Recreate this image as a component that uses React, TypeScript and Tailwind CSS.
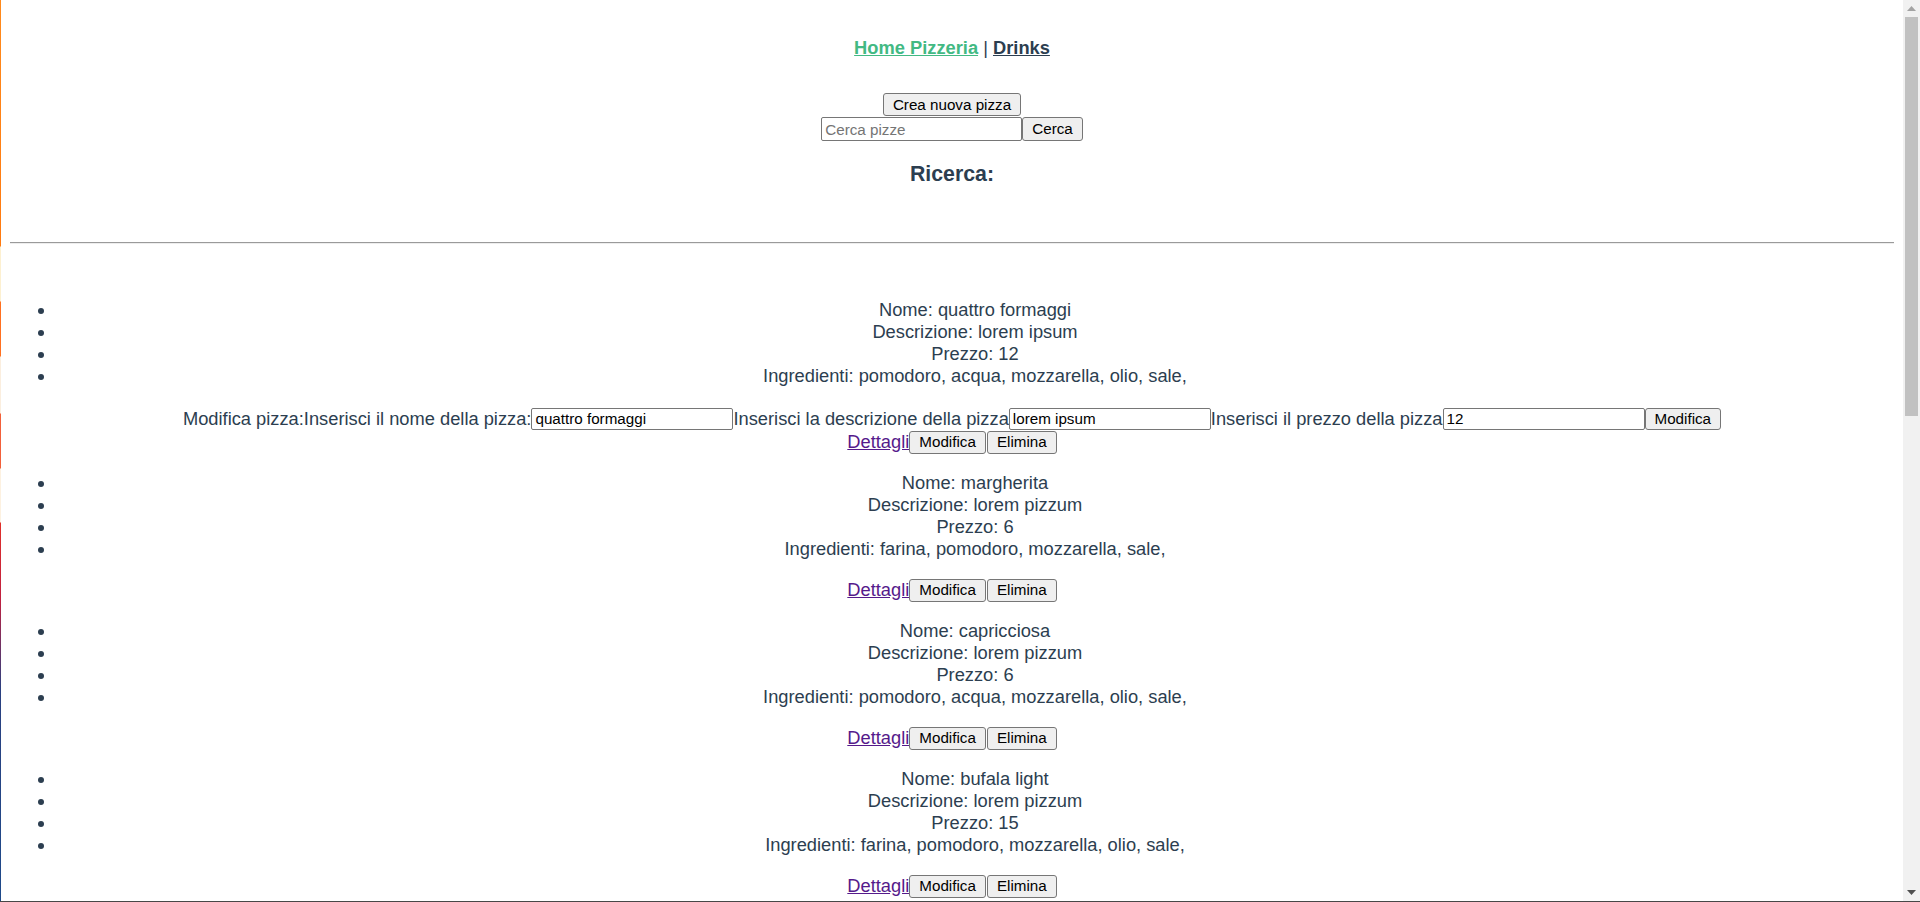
import React from "react";

interface Pizza {
  nome: string;
  descrizione: string;
  prezzo: number;
  ingredienti: string[];
  editing?: boolean;
}

const pizzas: Pizza[] = [
  {
    nome: "quattro formaggi",
    descrizione: "lorem ipsum",
    prezzo: 12,
    ingredienti: ["pomodoro", "acqua", "mozzarella", "olio", "sale"],
    editing: true,
  },
  {
    nome: "margherita",
    descrizione: "lorem pizzum",
    prezzo: 6,
    ingredienti: ["farina", "pomodoro", "mozzarella", "sale"],
  },
  {
    nome: "capricciosa",
    descrizione: "lorem pizzum",
    prezzo: 6,
    ingredienti: ["pomodoro", "acqua", "mozzarella", "olio", "sale"],
  },
  {
    nome: "bufala light",
    descrizione: "lorem pizzum",
    prezzo: 15,
    ingredienti: ["farina", "pomodoro", "mozzarella", "olio", "sale"],
  },
];

const btn =
  "bg-[#efefef] border border-[#767676] rounded-[3px] px-[9px] text-[15.2px] text-black leading-none shrink-0";
const field =
  "border border-[#767676] rounded-[2px] px-[3px] text-[15.2px] text-black leading-none placeholder:text-[#757575] shrink-0";

const ModificaForm: React.FC<{ pizza: Pizza }> = ({ pizza }) => (
  <div className="mt-[19.5px] flex justify-center items-center h-[24px] whitespace-nowrap">
    <span>Modifica pizza:Inserisci il nome della pizza:</span>
    <input className={`${field} w-[202px] h-[22px]`} defaultValue={pizza.nome} />
    <span>Inserisci la descrizione della pizza</span>
    <input className={`${field} w-[202px] h-[22px]`} defaultValue={pizza.descrizione} />
    <span>Inserisci il prezzo della pizza</span>
    <input className={`${field} w-[202px] h-[22px]`} defaultValue={String(pizza.prezzo)} />
    <button className={`${btn} h-[22px]`}>Modifica</button>
  </div>
);

const ScrollBar = () => (
  <div className="w-[17px] shrink-0 bg-[#f1f1f1] flex flex-col items-center">
    <div className="h-[17px] w-full flex items-center justify-center">
      <svg width="9" height="5" viewBox="0 0 9 5">
        <path d="M0 5 L4.5 0 L9 5 Z" fill="#a3a3a3" />
      </svg>
    </div>
    <div className="w-[13px] h-[399px] bg-[#c1c1c1]" />
    <div className="flex-1" />
    <div className="h-[17px] w-full flex items-center justify-center">
      <svg width="9" height="5" viewBox="0 0 9 5">
        <path d="M0 0 L4.5 5 L9 0 Z" fill="#505050" />
      </svg>
    </div>
  </div>
);

export default function App() {
  return (
    <div
      className="flex h-[902px] w-full overflow-hidden bg-white border-b border-[#474747]"
      style={{ fontFamily: '"Liberation Sans", Arial, Helvetica, sans-serif' }}
    >
      <div className="w-px shrink-0 bg-[linear-gradient(to_bottom,#ff8a1c_0px,#ff7a10_246px,#fdf0d0_247px,#fdf0d0_301px,#ff7020_302px,#ff7020_356px,#fbeede_357px,#fbeede_413px,#f2603a_414px,#f2603a_468px,#fdf1e0_469px,#fdf1e0_522px,#e0302a_523px,#c02040_600px,#7a3060_640px,#2a4080_690px,#1e4a8a_902px)]" />

      <main className="flex-1 min-w-0 flex flex-col px-[9px] text-[#2c3e50] text-[18.3px] leading-[22px] text-center">
        <nav className="pt-[37px]">
          <a className="font-bold text-[#42b983] underline cursor-pointer">Home Pizzeria</a> |{" "}
          <a className="font-bold text-[#2c3e50] underline cursor-pointer">Drinks</a>
        </nav>

        <div className="mt-[34px] flex justify-center">
          <button className={`${btn} h-[23px]`}>Crea nuova pizza</button>
        </div>
        <div className="mt-px flex justify-center">
          <input className={`${field} w-[201px] h-[24px]`} placeholder="Cerca pizze" />
          <button className={`${btn} h-[24px]`}>Cerca</button>
        </div>

        <h3 className="mt-[21px] text-[21.3px] leading-[25px] font-bold">Ricerca:</h3>

        <div className="mt-[55px] h-[2px] border-t border-t-[#9a9a9a] border-b border-b-[#ededed]" />

        {pizzas.map((p, i) => (
          <React.Fragment key={p.nome}>
            <ul className={`list-disc pl-[46px] ${i === 0 ? "mt-[55px]" : "mt-[18.5px]"}`}>
              <li>Nome: {p.nome}</li>
              <li>Descrizione: {p.descrizione}</li>
              <li>Prezzo: {p.prezzo}</li>
              <li>Ingredienti: {p.ingredienti.map((ing) => ing + ", ").join("")}</li>
            </ul>
            {p.editing && <ModificaForm pizza={p} />}
            <div className={`flex justify-center items-center h-[23px] ${p.editing ? "" : "mt-[18.5px]"}`}>
              <a className="text-[#551a8b] underline cursor-pointer">Dettagli</a>
              <button className={`${btn} h-[23px]`}>Modifica</button>
              <button className={`${btn} h-[23px] ml-px`}>Elimina</button>
            </div>
          </React.Fragment>
        ))}
      </main>

      <ScrollBar />
    </div>
  );
}
